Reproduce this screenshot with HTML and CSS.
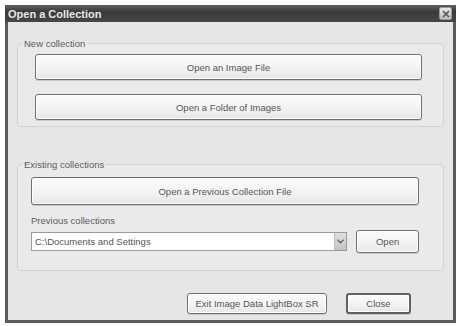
FILE: index.html
```html
<!DOCTYPE html>
<html>
<head>
<meta charset="utf-8">
<link rel="stylesheet" href="styles.css">
</head>
<body>
<div class="window">
  <div class="titlebar">
    <span class="title">Open a Collection</span>
    <span class="xbtn"><svg width="8" height="8" viewBox="0 0 8 8"><path d="M1 1L7 7M7 1L1 7" stroke="#555" stroke-width="1.6"/></svg></span>
  </div>
  <div class="content">
    <fieldset class="group g1">
      <legend>New collection</legend>
      <button class="btn big">Open an Image File</button>
      <button class="btn big">Open a Folder of Images</button>
    </fieldset>
    <fieldset class="group g2">
      <legend>Existing collections</legend>
      <button class="btn big tall">Open a Previous Collection File</button>
      <div class="label">Previous collections</div>
      <div class="comborow">
        <div class="combo">
          <span class="combotext">C:\Documents and Settings</span>
          <span class="arrow"><svg width="7" height="5" viewBox="0 0 7 5"><path d="M0.5 0.8L3.5 3.8L6.5 0.8" stroke="#666" stroke-width="1.4" fill="none"/></svg></span>
        </div>
        <button class="btn open">Open</button>
      </div>
    </fieldset>
    <div class="footer">
      <button class="btn exit">Exit Image Data LightBox SR</button>
      <button class="btn close">Close</button>
    </div>
  </div>
</div>
</body>
</html>
```
FILE: styles.css
```css
html, body {
  margin: 0;
  padding: 0;
  background: #ffffff;
}
body {
  padding: 5px 0 0 5px;
  font-family: "Liberation Sans", Arial, sans-serif;
  font-size: 9.5px;
  color: #555;
}
.window {
  width: 451px;
  height: 318px;
  box-sizing: border-box;
  display: flex;
  flex-direction: column;
  border: 3px solid #5a5a5a;
  border-top: 0;
  background: #e6e6e6;
}
.titlebar {
  height: 17px;
  margin: 0 -3px;
  background: linear-gradient(#5e5e5e, #3a3a3a 40%, #464646);
  display: flex;
  align-items: center;
  justify-content: space-between;
  padding: 0 4px 0 3px;
}
.title {
  color: #e8e8e8;
  font-weight: bold;
  font-size: 11px;
}
.xbtn {
  width: 11px;
  height: 11px;
  background: linear-gradient(#e8e8e8, #bcbcbc);
  border: 1px solid #9a9a9a;
  border-radius: 2px;
  display: flex;
  align-items: center;
  justify-content: center;
}
.content {
  flex: 1;
  display: flex;
  flex-direction: column;
  padding: 16px 9px 0 9px;
}
.group {
  margin: 0;
  border: 1px solid #d2d2d2;
  border-radius: 4px;
  background: #eaeaea;
  display: flex;
  flex-direction: column;
  min-width: 0;
}
.group legend {
  padding: 0 2px;
  line-height: 11px;
  color: #5a5a5a;
}
.g1 {
  padding: 5px 21px 6px 17px;
  gap: 14px;
}
.g1 legend {
  margin-left: -13px;
}
.g2 {
  margin-top: 32px;
  padding: 7px 24px 17px 13px;
}
.g2 legend {
  margin-left: -9px;
}
.btn {
  font-family: "Liberation Sans", Arial, sans-serif;
  font-size: 9.5px;
  color: #555;
  background: linear-gradient(#fbfbfb, #f2f2f2 60%, #e6e6e6);
  border: 1px solid #707070;
  border-radius: 3px;
  box-shadow: inset 0 0 0 1px #ffffff, 0 1px 0 #c8c8c8;
  padding: 0;
}
.big {
  height: 26px;
}
.tall {
  height: 28px;
}
.label {
  margin-top: 10px;
  line-height: 11px;
  color: #5a5a5a;
}
.comborow {
  margin-top: 4px;
  display: flex;
  align-items: center;
  gap: 9px;
}
.combo {
  width: 317px;
  height: 19px;
  box-sizing: border-box;
  border: 1px solid #9a9a9a;
  background: #fff;
  display: flex;
  align-items: center;
}
.combotext {
  flex: 1;
  padding-left: 3px;
  color: #555;
}
.arrow {
  width: 11px;
  height: 17px;
  background: linear-gradient(#e0e0e0, #c4c4c4);
  border-left: 1px solid #bbb;
  display: flex;
  align-items: center;
  justify-content: center;
}
.open {
  width: 63px;
  height: 23px;
}
.footer {
  margin-top: 22px;
  display: flex;
  justify-content: flex-end;
  gap: 19px;
  padding-right: 33px;
}
.exit {
  width: 140px;
  height: 21px;
}
.close {
  width: 65px;
  height: 21px;
  border: 2px solid #606060;
}
```
